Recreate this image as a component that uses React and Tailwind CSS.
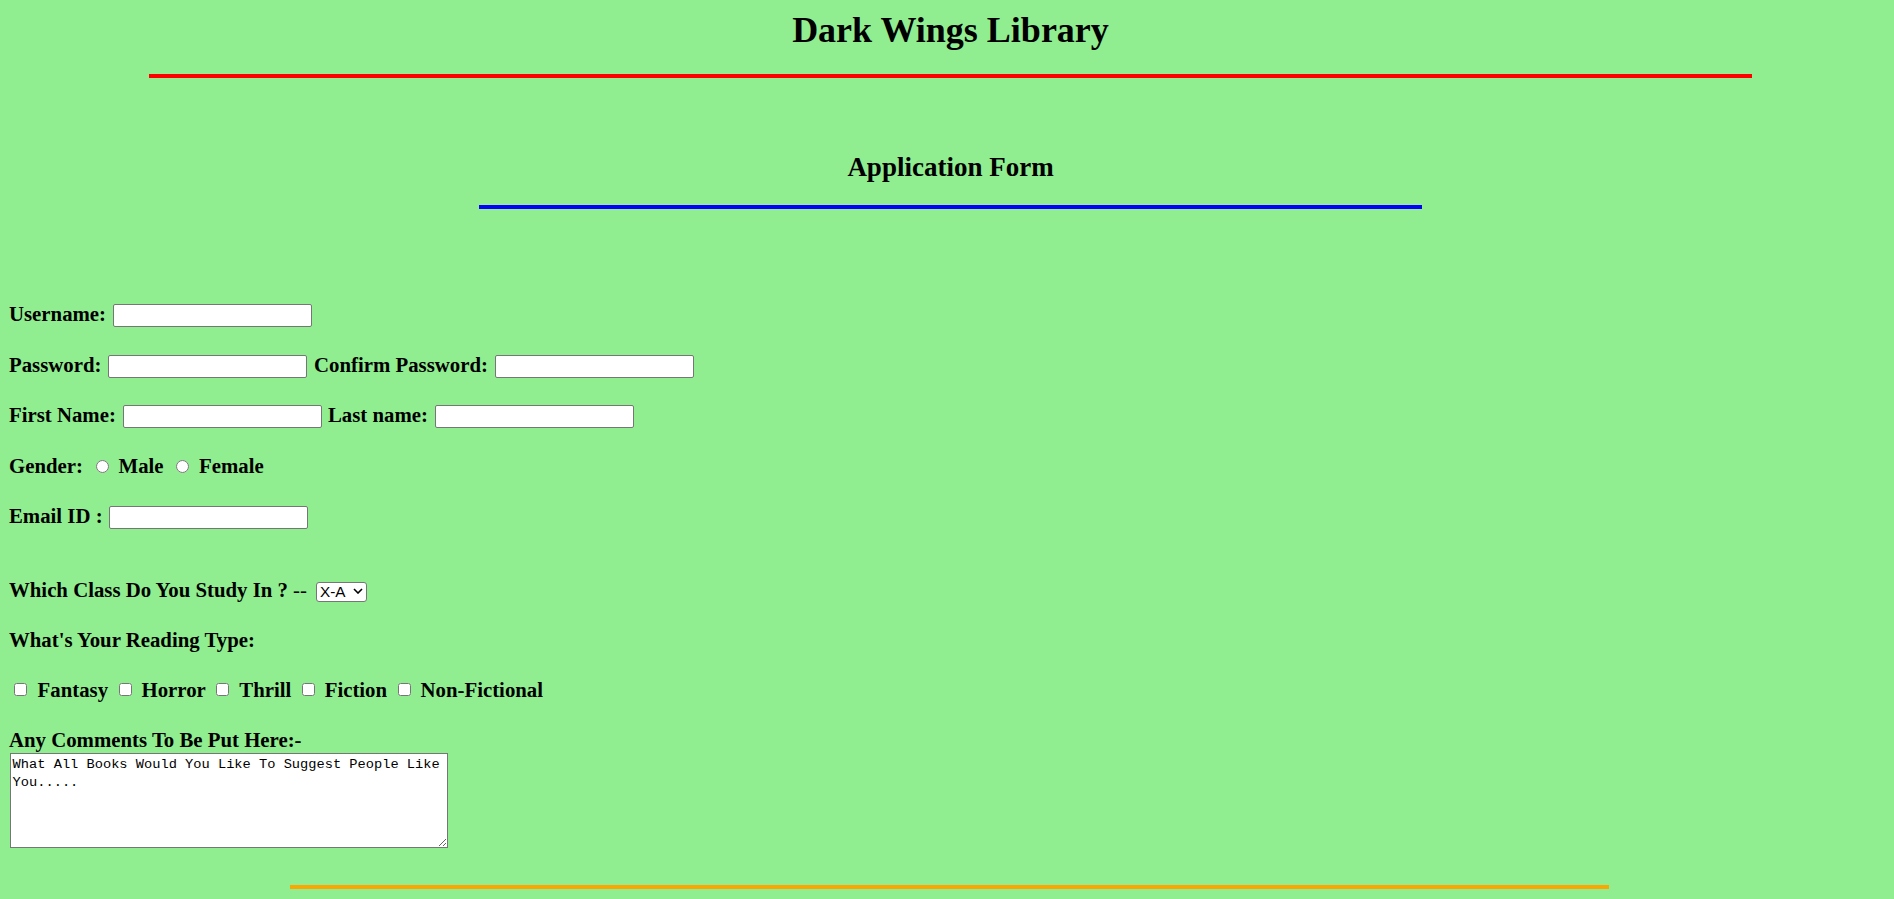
import React from "react";

function TextInput({ className = "" }) {
  return (
    <input
      type="text"
      className={`block w-[199px] h-[23px] mt-[2px] border border-[#767676] bg-white rounded-[2px] ${className}`}
    />
  );
}

function Label({ w, pl = "", children }) {
  return (
    <span className={`block shrink-0 whitespace-nowrap font-bold ${w} ${pl}`}>{children}</span>
  );
}

export default function App() {
  return (
    <div className="min-h-screen w-full bg-[#90ee90] text-black font-['Liberation_Serif',serif] pt-[9.5px] pb-[10px]">
      <h1 className="pl-[7px] text-center text-[36px] leading-[40px] h-[40px] font-bold">
        Dark Wings Library
      </h1>
      <div className="mt-[24.5px] ml-[149px] w-[1603px] h-[4px] bg-[#ff0000]" />

      <h2 className="mt-[73px] pl-[7px] text-center text-[27px] leading-[32px] h-[32px] font-bold">
        Application Form
      </h2>
      <div className="mt-[22px] ml-[479px] w-[943px] h-[4px] bg-[#0000ff]" />

      <form className="pl-[9px] text-[20.8px] leading-[24px]">
        <div className="mt-[93px] flex items-start h-[24px]">
          <Label w="w-[104px]">Username:</Label>
          <TextInput />
        </div>

        <div className="mt-[26.5px] flex items-start h-[24px]">
          <Label w="w-[99px]">Password:</Label>
          <TextInput />
          <Label w="w-[188px]" pl="pl-[7px]">Confirm Password:</Label>
          <TextInput />
        </div>

        <div className="mt-[26.5px] flex items-start h-[24px]">
          <Label w="w-[113.5px]">First Name:</Label>
          <TextInput />
          <Label w="w-[113.5px]" pl="pl-[6.5px]">Last name:</Label>
          <TextInput />
        </div>

        <div className="mt-[26.5px] flex items-start h-[24px]">
          <Label w="w-[86.5px]">Gender:</Label>
          <input type="radio" name="gender" className="block m-0 mt-[6.5px] w-[13px] h-[13px] shrink-0" />
          <Label w="w-[67.5px]" pl="pl-[10px]">Male</Label>
          <input type="radio" name="gender" className="block m-0 mt-[6.5px] w-[13px] h-[13px] shrink-0" />
          <Label w="w-[80px]" pl="pl-[10px]">Female</Label>
        </div>

        <div className="mt-[26.5px] flex items-start h-[24px]">
          <Label w="w-[100px]">Email ID :</Label>
          <TextInput />
        </div>

        <div className="mt-[49.7px] flex items-start h-[24px]">
          <span className="block shrink-0 whitespace-nowrap w-[307px]">
            <span className="font-bold">Which Class Do You Study In ?</span> --
          </span>
          <div className="relative mt-[4px] w-[51px] h-[20px] shrink-0">
            <select className="block appearance-none w-full h-full border border-[#767676] rounded-[3px] bg-white pl-[3px] pr-[14px] text-[15.3px] leading-[18px] font-['Liberation_Sans',sans-serif] text-black">
              <option>X-A</option>
              <option>X-B</option>
              <option>X-C</option>
            </select>
            <svg
              className="pointer-events-none absolute right-[4px] top-[6.5px]"
              width="10"
              height="6"
              viewBox="0 0 10 6"
              fill="none"
            >
              <path d="M1 1 L5 5 L9 1" stroke="#000" strokeWidth="1.6" />
            </svg>
          </div>
        </div>

        <div className="mt-[26.6px] flex items-start h-[24px]">
          <Label w="">What's Your Reading Type:</Label>
        </div>

        <div className="mt-[25.4px] flex items-start h-[24px]">
          <input type="checkbox" className="block m-0 ml-[5px] mt-[5.7px] w-[13px] h-[13px] shrink-0" />
          <Label w="w-[91.5px]" pl="pl-[10.6px]">Fantasy</Label>
          <input type="checkbox" className="block m-0 mt-[5.7px] w-[13px] h-[13px] shrink-0" />
          <Label w="w-[84.8px]" pl="pl-[10px]">Horror</Label>
          <input type="checkbox" className="block m-0 mt-[5.7px] w-[13px] h-[13px] shrink-0" />
          <Label w="w-[72.4px]" pl="pl-[10px]">Thrill</Label>
          <input type="checkbox" className="block m-0 mt-[5.7px] w-[13px] h-[13px] shrink-0" />
          <Label w="w-[82.9px]" pl="pl-[10px]">Fiction</Label>
          <input type="checkbox" className="block m-0 mt-[5.7px] w-[13px] h-[13px] shrink-0" />
          <Label w="" pl="pl-[10px]">Non-Fictional</Label>
        </div>

        <div className="mt-[26.6px] flex items-start h-[24px]">
          <Label w="">Any Comments To Be Put Here:-</Label>
        </div>

        <textarea
          className="block mt-[1px] ml-[0.6px] w-[438px] h-[95px] border border-[#767676] bg-white px-[2px] pt-[2px] font-['Liberation_Mono',monospace] text-[13.7px] leading-[18px] text-black"
          defaultValue="What All Books Would You Like To Suggest People Like You....."
        />
      </form>

      <div className="mt-[36.7px] ml-[290px] w-[1319px] h-[4px] bg-[#ffa500]" />
    </div>
  );
}
